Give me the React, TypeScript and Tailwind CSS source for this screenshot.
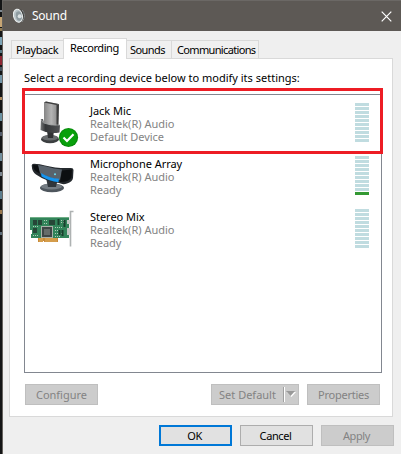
import React from "react";

const specks: [number, number, string][] = [
  [10, 2, "#7c8790"], [17, 10, "#c6a574"], [28, 3, "#8f7a52"], [37, 8, "#7da3b5"],
  [50, 3, "#597a86"], [56, 9, "#8e2734"], [67, 4, "#45535f"], [75, 8, "#7496a8"],
  [97, 3, "#b28c5f"], [113, 8, "#6c93a3"], [132, 4, "#535c6b"], [153, 8, "#728f9e"],
  [172, 4, "#7c8790"], [191, 8, "#5d7e8e"], [210, 4, "#99784e"], [232, 3, "#5d6c78"],
];

function SpeakerIcon() {
  return (
    <svg width="14" height="16" viewBox="0 0 14 16" className="shrink-0">
      <path d="M4 1 L9 2 L12 5 V10 L10 13 L6 15Z" fill="#3b3d3c" />
      <path d="M9 2 Q14 7 9 14" fill="none" stroke="#8b8e8e" />
      <ellipse cx="5" cy="7.7" rx="4.4" ry="6.6" fill="#b9c4c8" stroke="#eef1f1" transform="rotate(-12 5 8)" />
      <ellipse cx="5.8" cy="8" rx="2.9" ry="4.7" fill="#8f9ca1" transform="rotate(-12 6 8)" />
      <circle cx="6.7" cy="8.3" r="2" fill="#dce2e3" />
    </svg>
  );
}

function JackIcon() {
  return (
    <svg width="42" height="48" viewBox="0 0 42 48">
      <defs>
        <linearGradient id="stick" x1="0" x2="1">
          <stop offset="0" stopColor="#858585" /><stop offset=".5" stopColor="#b4b4b4" /><stop offset="1" stopColor="#858585" />
        </linearGradient>
        <linearGradient id="holder" x1="0" x2="1">
          <stop offset="0" stopColor="#77797a" /><stop offset=".25" stopColor="#343638" /><stop offset="1" stopColor="#505254" />
        </linearGradient>
      </defs>
      <ellipse cx="11" cy="38.2" rx="9" ry="4" fill="#3c3f41" />
      <ellipse cx="11" cy="36.8" rx="8" ry="2.8" fill="#686c6e" />
      <path d="M8 30h7l-1 7H9Z" fill="#303234" />
      <path d="M5 1.5 L7 .5 L19.5 3 L19 25 L5 23Z" fill="url(#stick)" />
      <path d="M5 1.5 L7 .5 L19.5 3 L17.5 4Z" fill="#3f3f3f" />
      <path d="M17.5 4 L20 3 L19.5 25 L17.5 25Z" fill="#3d3d3d" />
      <path d="M2 18 L4 18 L5 22 Q12 25 21 24 L20.5 31.5 Q10 33.5 1.5 29Z" fill="url(#holder)" />
      <path d="M2 18.5 L4.5 22 Q12 25 21 24" fill="none" stroke="#a5a7a8" strokeWidth=".7" />
      <circle cx="29.5" cy="36.5" r="9.6" fill="#078b0b" />
      <circle cx="29.5" cy="36.5" r="8.4" fill="#08a00b" />
      <path d="M24.5 36.5 L28 40 L34.5 33.3" fill="none" stroke="#fff" strokeWidth="2.2" />
    </svg>
  );
}

function ArrayIcon() {
  return (
    <svg width="44" height="34" viewBox="0 0 44 34">
      <ellipse cx="21" cy="26.8" rx="12" ry="4.4" fill="#4e565d" />
      <ellipse cx="20.5" cy="25.5" rx="10.5" ry="3" fill="#757d84" />
      <path d="M15 17h12l-2 9h-8Z" fill="#30363b" />
      <path d="M.7 4.5 Q.7 2.7 3 2.8 Q9 3 14 4.5 Q25 7.5 40 7 Q42.5 7 42.5 9 L42 17 Q41.5 20.5 36 22.5 Q32 24 28 22 Q15 20.5 5 13.5 Q1 11 .7 4.5Z" fill="#24292d" />
      <path d="M7 4 Q16 5 23 7.5 L31 8.5 L29 19 Q18 17 8.5 12Z" fill="#59636c" />
      <path d="M10 12 Q18 17 28 17.8 L27.5 21.3 Q18 20 10.5 15.5Z" fill="#1695ef" />
      <path d="M2 4 L7 4.5 L9 12.5 Q2 10 2 4Z M31 9.5 L41 8.5 L40.5 16.5 Q38 21 29 21Z" fill="#0c0f11" />
      <circle cx="24" cy="13.3" r="1" fill="#6bdcf5" />
    </svg>
  );
}

function CardIcon() {
  return (
    <svg width="44" height="38" viewBox="0 0 44 38">
      <path d="M0 7h39v21H1v-4h1v-4H0Z" fill="#32845a" />
      <path d="M0 7h39v1H0Z" fill="#6eae86" />
      <path d="M8 28h20v4H14v-1h-1v1H8Z" fill="#c98a38" />
      <path d="M10 28v4m2-4v4m4-4v4m2-4v4m2-4v4m2-4v4m2-4v4m2-4v4" stroke="#f0c979" strokeWidth=".6" />
      <path d="M11 16h12v12H11Z" fill="#a9b1a9" />
      <path d="M12 17h10v10H12Z" fill="#3f4646" />
      <path d="M14 19h6v6h-6Z" fill="#656c6a" />
      <path d="M3 10h4v5H3Zm5 0h4v5H8Zm11 0h6v5h-6ZM3 18h4v5H3Z" fill="#264637" />
      <path d="M3 16.5h6M3 25.5h6M14 10.5h4M14 13.5h4M25 17.5h7M25 20.5h6M25 23.5h7M25 26.5h5M31 10.5h4M31 12.5h4" stroke="#b0cdb8" strokeDasharray="1 1" />
      <path d="M28.5 9v6m6-5v7m-2 3v6m-3-6v5" stroke="#183f2d" strokeWidth="2" />
      <path d="M43.5 1.5h-3v35" fill="none" stroke="#aeb2b2" strokeWidth="1.6" />
      <path d="M37 10h3v4h-3Zm0 8h3v7h-3Z" fill="#c2c7c4" />
    </svg>
  );
}

function Meter({ active = false }: { active?: boolean }) {
  return (
    <div className="flex w-[14px] flex-col gap-px pt-[8px]">
      {Array.from({ length: 10 }, (_, i) => (
        <div key={i} className={`h-[3px] ${active && i === 9 ? "bg-[#339933]" : "bg-[#c0dce0]"}`} />
      ))}
    </div>
  );
}

function Device({ name, state, icon, iconClass, active }: {
  name: string; state: string; icon: React.ReactNode; iconClass: string; active?: boolean;
}) {
  return (
    <div className="flex h-[53px]">
      <div className={`w-[65px] shrink-0 ${iconClass}`}>{icon}</div>
      <div className="w-[265px] whitespace-nowrap pt-[9px] text-[11px] leading-[13px] text-[#838383]">
        <div className="tracking-[-0.04px] text-black">{name}</div>
        <div>Realtek(R) Audio</div>
        <div className="tracking-[-0.04px]">{state}</div>
      </div>
      <Meter active={active} />
    </div>
  );
}

const button = "flex h-[21px] w-[73px] items-center justify-center text-[11px] leading-none";
const disabled = "border border-[#bfbfbf] bg-[#cccccc] text-[#838383]";
const tab = "flex h-[18px] items-center border-t border-[#d9d9d9] bg-[#f0f0f0]";

export default function App() {
  return (
    <div className="flex h-[454px] w-[401px] overflow-hidden bg-[#efefef] font-['Noto_Sans','Open_Sans',sans-serif] text-[11px] text-black">
      <div className="relative w-[3px] shrink-0 border-r border-[#66635f] bg-[#141516]">
        {specks.map(([y, h, color]) => (
          <div key={y} className="absolute left-0 w-[2px]" style={{ top: y, height: h, background: color }} />
        ))}
      </div>
      <div className="flex w-[398px] flex-col">
        <header className="flex h-[31px] shrink-0 items-center border-t border-[#6b6865] bg-[#5d5955] pl-[10px] pr-[9px] text-white">
          <SpeakerIcon />
          <span className="ml-[5px] text-[12px] leading-none tracking-[-0.25px]">Sound</span>
          <svg className="ml-auto" width="11" height="11" viewBox="0 0 11 11"><path d="M.7.7l9.6 9.6m0-9.6L.7 10.3" stroke="white" strokeWidth="1.2" /></svg>
        </header>
        <nav className="relative z-10 -mb-px flex h-[28px] items-end pb-px pl-[8px] leading-none">
          <div className={`${tab} w-[52px] border-l pl-[4px] tracking-[-0.4px]`}>Playback</div>
          <div className="-mb-px flex h-[21px] w-[64px] items-center border-x border-t border-[#d9d9d9] bg-white pb-[3px] pl-[6px] tracking-[-0.4px]">Recording</div>
          <div className={`${tab} w-[44px] pl-[3px] tracking-[-0.55px]`}>Sounds</div>
          <div className={`${tab} w-[88px] border-x pl-[5px] tracking-[-0.65px]`}>Communications</div>
        </nav>
        <main className="ml-[6px] h-[359px] w-[384px] shrink-0 border border-[#d9d9d9] bg-white pl-[14px] pr-[10px] pt-[12px]">
          <div className="h-[23px] whitespace-nowrap leading-[13px]">Select a recording device below to modify its settings:</div>
          <div className="relative h-[279px] w-[358px] border border-[#828790]">
            <Device name="Jack Mic" state="Default Device" icon={<JackIcon />} iconClass="pl-[14px] pt-[6px]" />
            <Device name="Microphone Array" state="Ready" icon={<ArrayIcon />} iconClass="pl-[6px] pt-[13px]" active />
            <Device name="Stereo Mix" state="Ready" icon={<CardIcon />} iconClass="pl-[5px] pt-[9px]" />
            <div className="pointer-events-none absolute -left-[3px] -top-[7px] h-[66px] w-[361px] border-[3px] border-[#ed1c24]" />
          </div>
          <div className="flex pt-[11px]">
            <div className={`${button} ${disabled} ml-px`}>Configure</div>
            <div className="ml-auto flex h-[21px] w-[88px] items-center border border-[#bfbfbf] bg-[#cccccc] leading-none text-[#838383]">
              <span className="w-[71px] text-center">Set Default</span>
              <span className="h-[15px] w-[2px] border-l border-r border-l-[#a0a0a0] border-r-white" />
              <svg width="12" height="7" viewBox="0 0 12 7"><path d="M1.5 1H11L6.5 6Z" fill="#fff" /><path d="M1 0H10L5.5 5Z" fill="#999" /></svg>
            </div>
            <div className={`${button} ${disabled} ml-[8px] mr-[2px] tracking-[-0.25px]`}>Properties</div>
          </div>
        </main>
        <footer className="flex justify-end gap-[8px] pr-[7px] pt-[8px]">
          <div className={`${button} border-2 border-[#0078d7] bg-[#e1e1e1] pr-[2px] tracking-[-0.5px]`}>OK</div>
          <div className={`${button} border border-[#adadad] bg-[#e1e1e1] pr-[2px] tracking-[-0.4px]`}>Cancel</div>
          <div className={`${button} ${disabled} pr-[2px] tracking-[-0.4px]`}>Apply</div>
        </footer>
      </div>
    </div>
  );
}
